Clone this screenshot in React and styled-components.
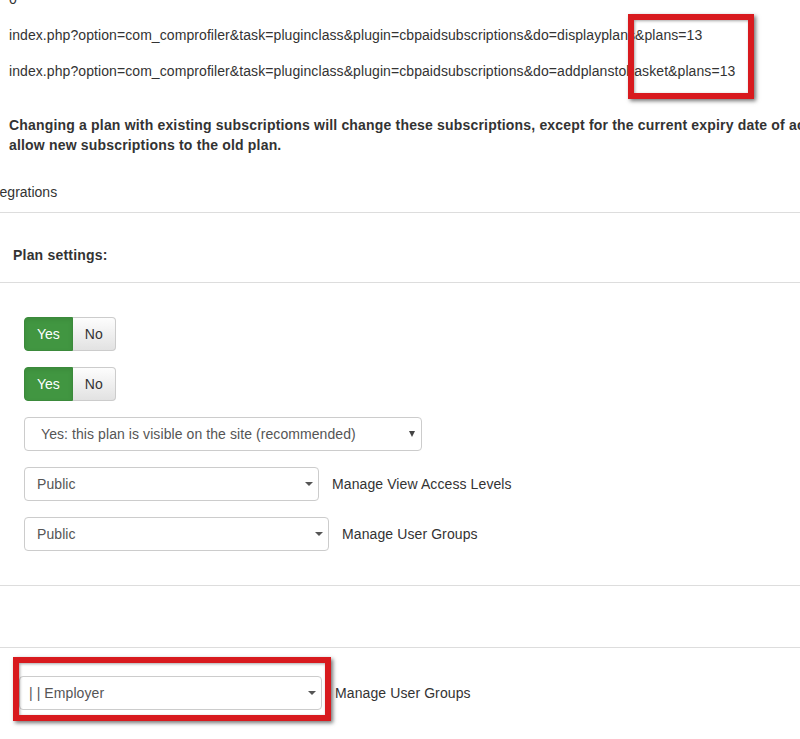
import React from 'react'
import styled, { createGlobalStyle, css } from 'styled-components'

const GlobalStyle = createGlobalStyle`
  html, body {
    margin: 0;
    padding: 0;
    background: #fff;
    overflow: hidden;
  }
  body {
    font-family: "Liberation Sans", Arial, Helvetica, sans-serif;
    font-size: 14px;
    line-height: 20px;
    color: #333;
  }
`

const Page = styled.div`
  position: relative;
  width: 800px;
  height: 739px;
  overflow: hidden;
`

const Intro = styled.div`
  position: relative;
  margin-top: -11px;
  padding-left: 9px;
`

const Line = styled.p`
  margin: 0 0 16px;
  white-space: nowrap;
  letter-spacing: 0.08px;
`

const Warning = styled.p`
  margin: 34px 0 27px;
  font-weight: bold;
  white-space: nowrap;
  letter-spacing: 0.18px;
`

const Annotation = styled.div`
  position: absolute;
  border: 6px solid #d81a1e;
  box-shadow: 2px 2px 4px rgba(0, 0, 0, 0.55), inset 1px 1px 3px rgba(0, 0, 0, 0.35);
  pointer-events: none;
  box-sizing: border-box;
`

const UrlMark = styled(Annotation)`
  left: 628px;
  top: 25px;
  width: 126px;
  height: 85px;
`

const TabBar = styled.div`
  padding-bottom: 10px;
  border-bottom: 1px solid #ddd;
  white-space: nowrap;
`

const Tab = styled.span`
  display: inline-block;
  margin-left: -16px;
`

const SectionHeader = styled.div`
  padding: 32px 13px 17px;
  font-weight: bold;
  letter-spacing: 0.2px;
  border-bottom: 1px solid #ddd;
`

const FieldList = styled.div`
  display: flex;
  flex-direction: column;
  gap: 16px;
  padding: 34px 24px;
  border-bottom: 1px solid #ddd;
`

const EmptyRow = styled.div`
  height: 61px;
  border-bottom: 1px solid #ddd;
`

const LastRow = styled.div`
  padding: 28px 19px 0;
`

const Field = styled.div`
  display: flex;
  align-items: center;
  gap: 13px;
`

const Toggle = styled.div`
  display: inline-flex;
`

const ToggleButton = styled.span`
  display: inline-block;
  padding: 6px 12px;
  border: 1px solid;
  line-height: 20px;
  ${p => p.active ? css`
    background: #419641;
    border-color: #3b8a3b;
    color: #fff;
    border-radius: 4px 0 0 4px;
    box-shadow: inset 0 2px 4px rgba(0, 0, 0, 0.08);
  ` : css`
    background: linear-gradient(to bottom, #fdfdfd 0%, #e2e2e2 100%);
    border-color: #ccc;
    border-left: 0;
    color: #333;
    border-radius: 0 4px 4px 0;
  `}
`

const SelectBox = styled.div`
  position: relative;
  box-sizing: border-box;
  width: ${p => p.width}px;
  height: 34px;
  padding: 6px 12px 6px ${p => p.pad}px;
  border: 1px solid #ccc;
  border-radius: 4px;
  background: #fff;
  color: #555;
  white-space: nowrap;
  letter-spacing: 0.08px;

  &::after {
    content: '';
    position: absolute;
    top: 50%;
    width: 0;
    height: 0;
    ${p => p.native ? css`
      right: 6px;
      margin-top: -3px;
      border-left: 3px solid transparent;
      border-right: 3px solid transparent;
      border-top: 6px solid #444;
    ` : css`
      right: 5px;
      margin-top: -2px;
      border-left: 4px solid transparent;
      border-right: 4px solid transparent;
      border-top: 4px solid #555;
    `}
  }
`

const FieldLabel = styled.span`
  color: #333;
  white-space: nowrap;
  letter-spacing: 0.1px;
`

const Marked = styled.div`
  position: relative;
`

const SelectMark = styled(Annotation)`
  left: -6px;
  top: -19px;
  right: -9px;
  bottom: -11px;
`

const YesNo = () => (
  <Toggle>
    <ToggleButton active>Yes</ToggleButton>
    <ToggleButton>No</ToggleButton>
  </Toggle>
)

export default function App() {
  return (
    <Page>
      <GlobalStyle />
      <Intro>
        <Line>0</Line>
        <Line>index.php?option=com_comprofiler&amp;task=pluginclass&amp;plugin=cbpaidsubscriptions&amp;do=displayplans&amp;plans=13</Line>
        <Line>index.php?option=com_comprofiler&amp;task=pluginclass&amp;plugin=cbpaidsubscriptions&amp;do=addplanstobasket&amp;plans=13</Line>
        <Warning>
          Changing a plan with existing subscriptions will change these subscriptions, except for the current expiry date of active subscriptions. Better create a new plan and do not
          <br />
          allow new subscriptions to the old plan.
        </Warning>
        <UrlMark />
      </Intro>

      <TabBar>
        <Tab>Integrations</Tab>
      </TabBar>

      <SectionHeader>Plan settings:</SectionHeader>

      <FieldList>
        <Field><YesNo /></Field>
        <Field><YesNo /></Field>
        <Field>
          <SelectBox width={398} pad={16} native>Yes: this plan is visible on the site (recommended)</SelectBox>
        </Field>
        <Field>
          <SelectBox width={295} pad={12}>Public</SelectBox>
          <FieldLabel>Manage View Access Levels</FieldLabel>
        </Field>
        <Field>
          <SelectBox width={305} pad={12}>Public</SelectBox>
          <FieldLabel>Manage User Groups</FieldLabel>
        </Field>
      </FieldList>

      <EmptyRow />

      <LastRow>
        <Field>
          <Marked>
            <SelectBox width={303} pad={9}>| | Employer</SelectBox>
            <SelectMark />
          </Marked>
          <FieldLabel>Manage User Groups</FieldLabel>
        </Field>
      </LastRow>
    </Page>
  )
}
